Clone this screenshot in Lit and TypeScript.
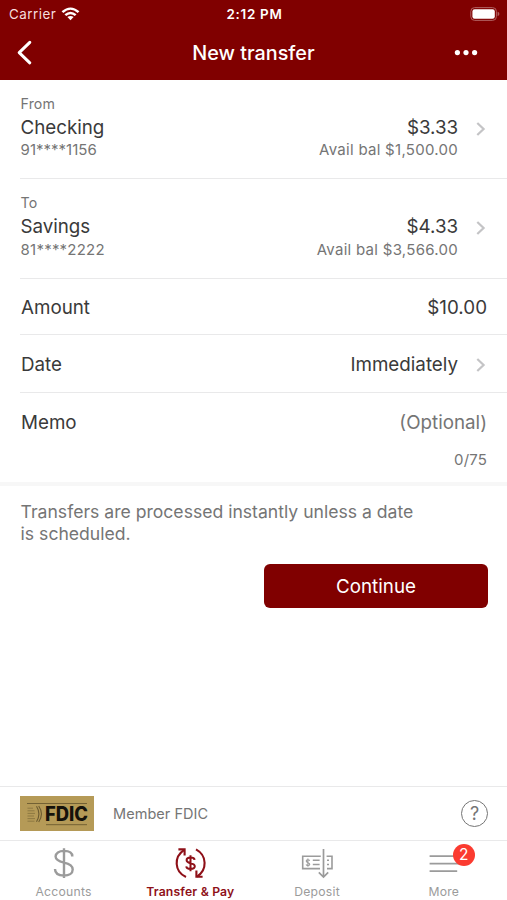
import { LitElement, html, css, svg } from "lit";
import { customElement, property } from "lit/decorators.js";

@customElement("row-chevron")
class RowChevron extends LitElement {
  static styles = css`
    :host { display: block; width: 10px; height: 16px; }
    svg { display: block; }
    path { fill: none; stroke: #c4c4c6; stroke-width: 2.2; }
  `;
  render() {
    return html`<svg width="10" height="16" viewBox="0 0 10 16"><path d="M1.3 2 L7.6 8 L1.3 14" /></svg>`;
  }
}

@customElement("account-row")
class AccountRow extends LitElement {
  @property() label = "";
  @property() name = "";
  @property() number = "";
  @property() amount = "";
  @property() balance = "";
  static styles = css`
    :host { display: grid; grid-template-columns: 1fr auto 10px; column-gap: 18px; padding-right: 21px; color: #757575; }
    .label { font-size: 14.2px; line-height: 20px; letter-spacing: 0.1px; }
    .name { font-size: 18.8px; line-height: 27px; color: #3a3a3a; letter-spacing: -0.05px; }
    .small { font-size: 15px; line-height: 20px; margin-top: var(--detail-gap, 0px); }
    .left .small { letter-spacing: var(--number-spacing, 0px); }
    .right { text-align: right; padding-top: 20px; }
    .right .small { letter-spacing: 0.28px; }
    row-chevron { margin-top: 27px; }
  `;
  render() {
    return html`
      <div class="left">
        <div class="label">${this.label}</div>
        <div class="name">${this.name}</div>
        <div class="small">${this.number}</div>
      </div>
      <div class="right">
        <div class="name">${this.amount}</div>
        <div class="small">${this.balance}</div>
      </div>
      <row-chevron></row-chevron>
    `;
  }
}

const icons = {
  accounts: svg`
    <path d="M33 4.2 V34 M41.3 12.4 C41.3 8.6 38 6.9 33 6.9 C27.9 6.9 24.6 9 24.6 12.6 C24.6 16.4 28.5 17.6 33 18.7 C37.8 19.8 41.7 21.4 41.7 25.5 C41.7 29.4 38.1 31.6 33 31.6 C27.7 31.6 24 29.4 24 25.1" stroke-width="2.4" />`,
  transfer: svg`
    <path d="M28 33 C16.2 27.5 15.6 12.8 26.2 5.8 M38 5.4 C49.2 11.5 49.4 25.9 39 32.6" stroke-width="2.1" />
    <path d="M20.4 5.4 H26.6 V11.6 M44.6 32.8 H38.4 V26.6" stroke-width="2.1" />
    <path d="M32.5 11.2 V27.2 M36.6 15.8 C36.4 14.3 34.7 13.6 32.5 13.6 C30.2 13.6 28.6 14.6 28.6 16.3 C28.6 18.2 30.5 18.7 32.5 19.2 C34.9 19.7 36.8 20.3 36.8 22.2 C36.8 24 35 24.9 32.5 24.9 C30.1 24.9 28.4 24 28.3 22.4" stroke-width="2" />`,
  deposit: svg`
    <path d="M35.8 12.2 H17.7 V24.6 H35 M41.6 12.2 H47 V24.6 H42" stroke-width="1.6" />
    <path d="M27.8 16.3 H34.6 M27.8 20.5 H34.6 M42 16.3 H44 M42 20.5 H44" stroke-width="1.6" />
    <path d="M22.9 14.4 V22.8 M24.7 16.8 C24 15.4 21.2 15.5 21.2 17.1 C21.2 19 24.8 18.5 24.8 20.3 C24.8 21.9 21.8 22 21 20.6" stroke-width="1.1" />
    <path d="M38.5 5 V33 M33.8 28.4 L38.5 33 L43.2 28.4" stroke-width="1.7" />`,
  more: svg`
    <path d="M17.6 12.1 H47 M17.6 19.7 H47 M17.6 27.1 H45.2" stroke-width="1.8" />`,
};

@customElement("tab-item")
class TabItem extends LitElement {
  @property() icon: keyof typeof icons = "accounts";
  @property() label = "";
  @property() badge = "";
  static styles = css`
    :host { display: flex; flex-direction: column; align-items: center; color: #9b9b9b; position: relative; padding-top: 3px; }
    :host([active]) { color: #8e1018; }
    svg { display: block; }
    path { fill: none; stroke: currentColor; }
    .label { font-size: 12.2px; line-height: 16px; letter-spacing: 0.25px; white-space: nowrap; margin-top: 0.5px; padding-left: 0.4px; }
    :host([active]) .label { font-weight: 600; letter-spacing: 0.18px; }
    .badge { position: absolute; left: 72.5px; top: 3px; width: 22px; height: 22px; border-radius: 50%; background: #fb3b30; color: #fff; font-size: 15.5px; line-height: 22px; text-align: center; }
  `;
  render() {
    return html`
      <svg width="64" height="39" viewBox="0 0 64 39">${icons[this.icon]}</svg>
      <div class="label">${this.label}</div>
      ${this.badge ? html`<div class="badge">${this.badge}</div>` : ""}
    `;
  }
}

@customElement("app-root")
class AppRoot extends LitElement {
  static styles = css`
    :host { display: flex; flex-direction: column; width: 507px; height: 900px; background: #fff; font-family: Inter, "Liberation Sans", sans-serif; color: #3a3a3a; overflow: hidden; }
    svg { display: block; }
    * { box-sizing: border-box; }
    header { height: 80px; background: #800000; color: #fff; flex: none; }
    .status, .nav { display: grid; grid-template-columns: 1fr auto 1fr; align-items: center; }
    .status { height: 27px; padding: 0 7px 0 9px; font-size: 13px; }
    .carrier { display: flex; gap: 5px; align-items: center; color: #f6dede; }
    .ctext { font-size: 13.4px; letter-spacing: 0.5px; }
    .time { font-size: 13.4px; font-weight: 600; letter-spacing: 0.7px; }
    .end { justify-self: end; }
    .nav { height: 51px; padding: 0 16px; }
    .dots { margin-right: 13px; }
    .title { font-size: 19.8px; font-weight: 450; }
    .line { height: 1px; background: #e9e9ea; margin-left: 20px; flex: none; }
    .account { height: 98px; padding-top: 14px; padding-left: 20.6px; box-sizing: border-box; --detail-gap: -1px; }
    .account.to { height: 99px; --detail-gap: 0px; --number-spacing: 0.22px; }
    .field { display: flex; align-items: center; padding: 2px 20px 0 21px; font-size: 18.8px; height: 56px; }
    .amount { height: 55px; }
    .field .value { margin-left: auto; }
    .date { height: 57px; padding-right: 21px; }
    .date row-chevron { margin-left: 18px; }
    .memo { height: 57px; }
    .muted { color: #757575; }
    .count { height: 32px; padding: 1px 20px 0 0; text-align: right; font-size: 15px; line-height: 18px; color: #757575; letter-spacing: 0.15px; }
    .band { height: 4px; background: #f7f7f7; flex: none; }
    .note { padding: 15px 20px 0 20.6px; font-size: 17.6px; line-height: 21.6px; color: #757575; white-space: nowrap; }
    .continue { display: block; width: 224px; height: 44px; margin: 19.4px 19px 0 auto; border: 0; border-radius: 6px; background: #800000; color: #fff; font: inherit; font-size: 18.8px; padding: 1px 0 0; }
    .spacer { flex: 1; }
    .full { margin-left: 0; }
    .member { display: flex; align-items: center; height: 53px; padding: 0 19px 0 20px; font-size: 14.5px; color: #757575; flex: none; }
    .member .text { margin-left: 19px; letter-spacing: 0.05px; }
    .help { margin-left: auto; width: 27px; height: 27px; border: 1.6px solid #757575; border-radius: 50%; font-size: 18px; line-height: 25px; text-align: center; }
    nav { display: grid; grid-template-columns: repeat(4, 1fr); height: 59px; flex: none; }
  `;

  render() {
    return html`
      <header>
        <div class="status">
          <div class="carrier"><span class="ctext">Carrier</span>
            <svg width="19" height="14" viewBox="0 0 19 14" fill="#fff">
              <path d="M0.6 4.3 Q9.5 -3.5 18.4 4.3 L16.7 6 Q9.5 -0.3 2.3 6 Z" />
              <path d="M3.5 7.2 Q9.5 2.2 15.5 7.2 L13.8 8.9 Q9.5 5.4 5.2 8.9 Z" />
              <path d="M6.4 10.1 Q9.5 7.8 12.6 10.1 L9.5 13.2 Z" />
            </svg>
          </div>
          <div class="time">2:12 PM</div>
          <svg class="end" width="30" height="14" viewBox="0 0 30 14">
            <rect x="0.8" y="0.6" width="25.6" height="12.8" rx="3.8" fill="none" stroke="#b06060" stroke-width="1" />
            <rect x="2.4" y="2.2" width="22.4" height="9.6" rx="2.2" fill="#fff" />
            <path d="M27.6 4.8 Q29.4 5.4 29.4 7 Q29.4 8.6 27.6 9.2 Z" fill="#b06060" />
          </svg>
        </div>
        <div class="nav">
          <svg width="18" height="26" viewBox="0 0 18 26"><path d="M13.8 2.4 L3.2 12.6 L13.8 22.8" fill="none" stroke="#fff" stroke-width="3" stroke-linecap="round" stroke-linejoin="round" /></svg>
          <div class="title">New transfer</div>
          <svg class="end dots" width="25" height="8" viewBox="0 0 25 8" fill="#fff"><circle cx="4.4" cy="3.6" r="2.6" /><circle cx="13" cy="3.6" r="2.6" /><circle cx="21.6" cy="3.6" r="2.6" /></svg>
        </div>
      </header>
      <account-row class="account" label="From" name="Checking" number="91****1156" amount="$3.33" balance="Avail bal $1,500.00"></account-row>
      <div class="line"></div>
      <account-row class="account to" label="To" name="Savings" number="81****2222" amount="$4.33" balance="Avail bal $3,566.00"></account-row>
      <div class="line"></div>
      <div class="field amount"><span>Amount</span><span class="value">$10.00</span></div>
      <div class="line"></div>
      <div class="field date"><span>Date</span><span class="value">Immediately</span><row-chevron></row-chevron></div>
      <div class="line"></div>
      <div class="field memo"><span>Memo</span><span class="value muted">(Optional)</span></div>
      <div class="count">0/75</div>
      <div class="band"></div>
      <div class="note">Transfers are processed instantly unless a date<br />is scheduled.</div>
      <button class="continue">Continue</button>
      <div class="spacer"></div>
      <div class="line full"></div>
      <div class="member">
        <svg width="74" height="35" viewBox="0 0 74 35">
          <rect width="74" height="35" fill="#b59a57" />
          <path d="M7 7.5 H67 M26 28.7 H67" stroke="#6b5a30" stroke-width="0.9" />
          <path d="M7.5 12.2 H13 M7.5 14.8 H14.5 M7.5 17.4 H15 M7.5 20 H14 M7.5 22.6 H15 M7.5 25.2 H14.5" stroke="#7d6a3a" stroke-width="0.7" />
          <path d="M16.5 10.3 Q21.3 17.9 16.5 25.8 M18.7 10 Q24.2 17.9 18.7 26" fill="none" stroke="#6b5a30" stroke-width="1.1" />
          <text x="25" y="25.4" font-family="Inter, sans-serif" font-size="19.5" font-weight="800" textLength="43" lengthAdjust="spacingAndGlyphs" fill="#15120b">FDIC</text>
        </svg>
        <span class="text">Member FDIC</span>
        <div class="help">?</div>
      </div>
      <div class="line full"></div>
      <nav>
        <tab-item icon="accounts" label="Accounts"></tab-item>
        <tab-item icon="transfer" label="Transfer &amp; Pay" active></tab-item>
        <tab-item icon="deposit" label="Deposit"></tab-item>
        <tab-item icon="more" label="More" badge="2"></tab-item>
      </nav>
    `;
  }
}
